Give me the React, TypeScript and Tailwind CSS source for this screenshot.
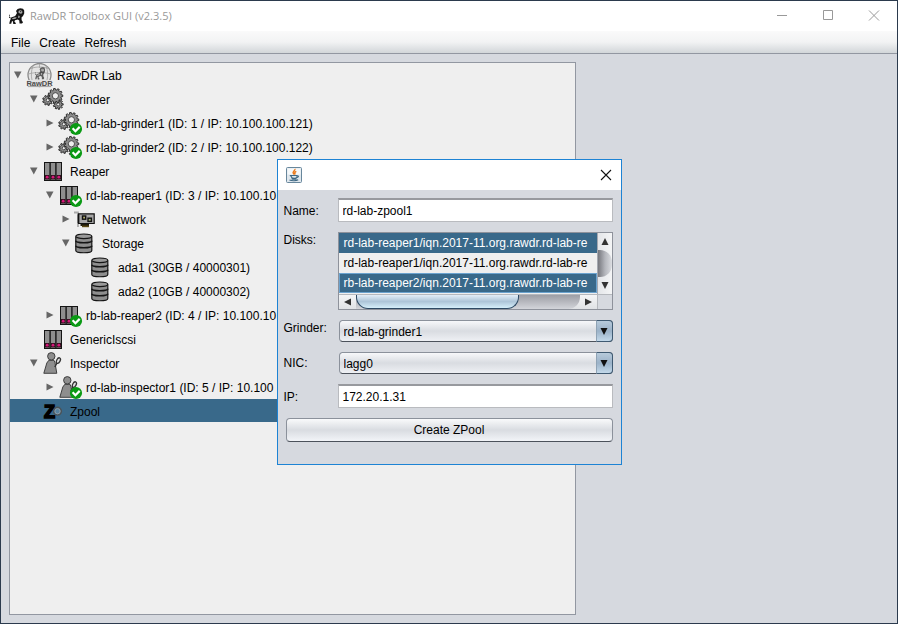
import React from 'react'

type IconName = 'lab' | 'gears' | 'rack' | 'nic' | 'disk' | 'inspector' | 'zpool'

interface TreeItem {
  label: string
  level: number
  icon: IconName
  state?: 'open' | 'closed'
  ok?: boolean
  selected?: boolean
}

const items: TreeItem[] = [
  { label: 'RawDR Lab', level: 0, icon: 'lab', state: 'open' },
  { label: 'Grinder', level: 1, icon: 'gears', state: 'open' },
  { label: 'rd-lab-grinder1 (ID: 1 / IP: 10.100.100.121)', level: 2, icon: 'gears', state: 'closed', ok: true },
  { label: 'rd-lab-grinder2 (ID: 2 / IP: 10.100.100.122)', level: 2, icon: 'gears', state: 'closed', ok: true },
  { label: 'Reaper', level: 1, icon: 'rack', state: 'open' },
  { label: 'rd-lab-reaper1 (ID: 3 / IP: 10.100.10', level: 2, icon: 'rack', state: 'open', ok: true },
  { label: 'Network', level: 3, icon: 'nic', state: 'closed' },
  { label: 'Storage', level: 3, icon: 'disk', state: 'open' },
  { label: 'ada1 (30GB / 40000301)', level: 4, icon: 'disk' },
  { label: 'ada2 (10GB / 40000302)', level: 4, icon: 'disk' },
  { label: 'rb-lab-reaper2 (ID: 4 / IP: 10.100.10', level: 2, icon: 'rack', state: 'closed', ok: true },
  { label: 'GenericIscsi', level: 1, icon: 'rack' },
  { label: 'Inspector', level: 1, icon: 'inspector', state: 'open' },
  { label: 'rd-lab-inspector1 (ID: 5 / IP: 10.100', level: 2, icon: 'inspector', state: 'closed', ok: true },
  { label: 'Zpool', level: 1, icon: 'zpool', selected: true },
]

const indents = ['pl-1', 'pl-5', 'pl-9', 'pl-13', 'pl-17']

function Dog() {
  return (
    <g>
      <path
        d="M1 6.5L0.3 8.8L1.6 9.8L3.5 9L6.2 8L8 5L7 3L8.6 1L11.2 0.2L14 0.8L15.2 2.6L15.2 5.6L14 8L12.5 9.5L12.5 12L14 14.2L13 15.6H10.5L10.3 12.6L8.8 11.6L6 12.2L5.4 13.6L7 15.2L6.4 16H4.3L3.8 13.2L3 13L2.2 15.7H0.2L1 12.5L2 10.5L0 9.8L0 7Z"
        fill="#161616"
      />
      <path d="M9.2 4.2l.8-1.6 1.8-.4 1.4.8.2 1.8-1.2 1-1.4-.3zM3 10.2l3-1 1.8.3-1.2 1.2-3 .6zM9.4 7.4l1.4.5-.4 2.2-1.4-.4z" fill="#a8a8a8" />
      <path d="M11 3.6h1.2M11.6 9.6l.2 3 1 2" fill="none" stroke="#161616" strokeWidth=".8" />
    </g>
  )
}

function gearPath(cx: number, cy: number, r: number, teeth: number) {
  const points: string[] = []
  const step = (Math.PI * 2) / teeth
  for (let i = 0; i < teeth; i++) {
    const a = i * step
    const corners = [
      [a - step * 0.3, r - 1.5],
      [a - step * 0.2, r],
      [a + step * 0.2, r],
      [a + step * 0.3, r - 1.5],
    ]
    corners.forEach(([angle, radius]) => {
      points.push(`${(cx + Math.cos(angle) * radius).toFixed(2)} ${(cy + Math.sin(angle) * radius).toFixed(2)}`)
    })
  }
  return `M${points.join('L')}Z`
}

function Gear({ cx, cy, r, hole, teeth }: { cx: number; cy: number; r: number; hole: number; teeth: number }) {
  return (
    <g>
      <path d={gearPath(cx, cy, r, teeth)} fill="#8c8c8c" stroke="#262626" strokeWidth=".9" strokeLinejoin="round" />
      <circle cx={cx} cy={cy} r={hole} fill="#efefef" stroke="#333" strokeWidth=".8" />
    </g>
  )
}

function Glyph({ name }: { name: IconName }) {
  switch (name) {
    case 'lab':
      return (
        <g>
          <circle cx="12.5" cy="12" r="11.5" fill="#e4e4e4" stroke="#8a8a8a" strokeWidth="1.3" />
          <path
            d="M4 5.5c5-2 12-2 17 0M1.5 11c6-2 16-2 22 0M6 3c-2 5-2 10-1 14M19 3c2 5 2 10 1 14M12.5 1v4"
            stroke="#a0a0a0"
            strokeWidth=".8"
            fill="none"
          />
          <g transform="translate(8 4) scale(.66 .78)" opacity=".65">
            <Dog />
          </g>
          <rect x="0" y="17" width="25" height="7" fill="#e2e2e2" />
          <text x="12.5" y="22.6" textAnchor="middle" fontSize="7.5" fontWeight="700" fill="#4c4c4c" fontFamily="Liberation Sans, sans-serif">
            RawDR
          </text>
          <path d="M1 23.6h23" stroke="#888" strokeWidth=".7" />
        </g>
      )
    case 'gears':
      return (
        <g>
          <Gear cx={15.2} cy={17.4} r={5} hole={1.5} teeth={9} />
          <Gear cx={4.8} cy={13.2} r={5.2} hole={1.6} teeth={9} />
          <Gear cx={12.4} cy={8.8} r={7.4} hole={3.1} teeth={11} />
        </g>
      )
    case 'rack':
      return (
        <g>
          <rect x="1" y="3" width="18" height="19" fill="#141414" />
          <path d="M2 4h4.4v17H2zM7.8 4h4.4v17H7.8zM13.6 4H18v17h-4.4z" fill="#8e8e8e" />
          <path d="M2 16h4.4v4.4H2zM7.8 16h4.4v4.4H7.8zM13.6 16H18v4.4h-4.4z" fill="#35101f" />
          <circle cx="4.2" cy="18.2" r="1.4" fill="#d4187a" />
          <circle cx="10" cy="18.2" r="1.4" fill="#d4187a" />
          <circle cx="15.8" cy="18.2" r="1.4" fill="#d4187a" />
        </g>
      )
    case 'nic':
      return (
        <g>
          <path d="M-1 5.5h4V20" fill="none" stroke="#a9a9a9" strokeWidth="1.8" />
          <path d="M3.5 6.8h15.7v9.7H3.5z" fill="#a6a6a6" stroke="#111" strokeWidth="1.2" />
          <path d="M3.5 7.5v8.5" stroke="#111" strokeWidth="1.6" />
          <rect x="7.5" y="9" width="3.2" height="3.2" fill="#b3ae6c" stroke="#111" strokeWidth="1.4" />
          <rect x="13" y="11.2" width="3.4" height="3.2" fill="#9fae72" stroke="#111" strokeWidth="1.4" />
          <path d="M5.5 17h8.5v2H5.5z" fill="#1d1a0c" />
          <path d="M7 18.6h7v1.6H7z" fill="#5b4a14" />
        </g>
      )
    case 'disk':
      return (
        <g fill="#8e8e8e" stroke="#151515" strokeWidth="1.2">
          <path d="M.8 5.5v14c0 3 16 3 16 0v-14" />
          <path d="M.8 9.8c0 2.6 16 2.6 16 0M.8 14.8c0 2.6 16 2.6 16 0" fill="none" strokeWidth="1.7" />
          <ellipse cx="8.8" cy="5.3" rx="8" ry="2.3" fill="#999" />
        </g>
      )
    case 'inspector':
      return (
        <g fill="#8e8e8e" stroke="#333" strokeWidth=".9">
          <path d="M5.8 9.3h5.2l1 2.4 1.8 10.6H.8L3.8 12z" />
          <circle cx="8.3" cy="5.3" r="3.7" />
          <ellipse cx="15.4" cy="9.6" rx="1.7" ry="3" transform="rotate(28 15.4 9.6)" fill="#e2e2e2" strokeWidth="1.3" />
          <path d="M14 12l-2.2 4" strokeWidth="1.5" />
        </g>
      )
    case 'zpool':
      return (
        <g>
          <text x="1" y="18.5" fontSize="18" fontWeight="700" stroke="#000" strokeWidth="1.6" fontFamily="Liberation Sans, sans-serif">
            Z
          </text>
          <circle cx="14.5" cy="12.2" r="3.8" fill="#56819f" stroke="#4b5358" strokeWidth="1.6" />
          <circle cx="14.5" cy="12.2" r="2.6" fill="none" stroke="#8f9da6" strokeWidth=".9" />
        </g>
      )
  }
}

function TreeRow({ item }: { item: TreeItem }) {
  return (
    <li
      role="treeitem"
      aria-level={item.level + 1}
      aria-selected={!!item.selected}
      aria-expanded={item.state ? item.state === 'open' : undefined}
      className={`flex items-center whitespace-nowrap ${indents[item.level]} ${item.selected ? 'h-[23px] bg-[#39698a]' : 'h-6'}`}
    >
      <svg viewBox="0 0 13 8" className="h-2 w-[13px] shrink-0" fill="#666">
        {item.state === 'open' && <path d="M0 0.5h7.5L3.8 7.5z" />}
        {item.state === 'closed' && <path d="M0.5 0.5L7.5 4L0.5 7.5z" />}
      </svg>
      <svg viewBox="0 0 25 24" className="h-6 w-[25px] shrink-0 overflow-visible">
        <Glyph name={item.icon} />
        {item.ok && (
          <g>
            <circle cx="17" cy="18" r="6.1" fill="#0a9a14" />
            <path d="M13.6 17.3l2.8 2.9 4.3-4.3" fill="none" stroke="#fff" strokeWidth="2.2" />
          </g>
        )}
      </svg>
      <span className={item.level === 0 ? 'ml-[5px] pt-0.5' : 'ml-[2px] pt-0.5'}>{item.label}</span>
    </li>
  )
}

function WindowButton({ label, children }: { label: string; children: React.ReactNode }) {
  return (
    <button type="button" aria-label={label} className="flex h-full w-[46px] items-center justify-center">
      <svg viewBox="0 0 12 12" className="size-3" fill="none" stroke="currentColor">
        {children}
      </svg>
    </button>
  )
}

function Combo({ id, value }: { id: string; value: string }) {
  return (
    <div className="relative ml-px h-[22px]">
      <select
        id={id}
        defaultValue={value}
        className="block h-full w-full appearance-none rounded border border-[#8b919b] border-b-[#4c525b] bg-linear-to-b from-[#f7f8fa] via-[#d9dce1] to-[#eef0f4] pt-px pl-1 text-xs"
      >
        <option>{value}</option>
      </select>
      <span className="pointer-events-none absolute inset-y-0 right-0 flex w-[17px] items-center justify-center rounded-r border border-[#3f5a72] border-l-[#8fa3b5] bg-linear-to-b from-[#b7cadb] via-[#9bb2c8] to-[#c3d9ea]">
        <svg viewBox="0 0 8 7" className="h-[7px] w-2">
          <path d="M0.5 0h7L4 7z" fill="#111" />
        </svg>
      </span>
    </div>
  )
}

function TextBox({ id, value }: { id: string; value: string }) {
  return (
    <input
      id={id}
      type="text"
      defaultValue={value}
      className="block h-6 w-full border border-[#b9bbbf] border-t-2 border-t-[#97999e] bg-white px-1 text-xs"
    />
  )
}

function DiskList() {
  return (
    <div className="grid h-[78px] grid-cols-[1fr_15px] grid-rows-[1fr_15px] border border-[#8e929b] bg-[#d6d9df]">
      <select
        id="disks"
        multiple
        size={3}
        defaultValue={['disk-a', 'disk-c']}
        className="block h-full w-full overflow-hidden bg-[#efefef] text-xs [scrollbar-width:none]"
      >
        <option value="disk-a" className="h-5 px-[5px] pt-[3px] pb-0 checked:bg-[#39698a] checked:text-white">
          rd-lab-reaper1/iqn.2017-11.org.rawdr.rd-lab-re
        </option>
        <option value="disk-b" className="h-5 px-[5px] pt-[3px] pb-0">
          rd-lab-reaper1/iqn.2017-11.org.rawdr.rd-lab-re
        </option>
        <option value="disk-c" className="h-5 border border-[#6ba3cf] px-1 pt-[2px] pb-0 checked:bg-[#39698a] checked:text-white">
          rb-lab-reaper2/iqn.2017-11.org.rawdr.rb-lab-re
        </option>
      </select>
      <div className="flex flex-col items-center justify-between border-l border-[#a4a8b0] bg-linear-to-r from-[#e4e6e9] to-[#f4f5f6]">
        <svg viewBox="0 0 14 17" className="h-[17px] w-[14px]">
          <path d="M3.5 12L7 5l3.5 7z" fill="#333" />
        </svg>
        <div className="w-full flex-1 rounded-r-xl bg-linear-to-r from-[#77787e] via-[#b4b6bc] to-[#dcdee2]" />
        <svg viewBox="0 0 14 17" className="h-[17px] w-[14px]">
          <path d="M3.5 5h7L7 12z" fill="#333" />
        </svg>
      </div>
      <div className="flex items-stretch border-t border-[#b5b8bd] bg-linear-to-b from-[#f4f5f6] to-[#e0e2e5]">
        <svg viewBox="0 0 17 14" className="h-[14px] w-[17px]">
          <path d="M12 3.5L5 7l7 3.5z" fill="#333" />
        </svg>
        <div className="flex flex-1 rounded-br-xl bg-linear-to-b from-[#9d9ea5] to-[#d3d5da]">
          <div className="w-[73%] rounded-b-xl border border-t-0 border-[#2e4a64] bg-linear-to-b from-[#e3eef8] via-[#adc5d8] to-[#d5effa]" />
        </div>
        <svg viewBox="0 0 17 14" className="h-[14px] w-[17px]">
          <path d="M5 3.5L12 7l-7 3.5z" fill="#333" />
        </svg>
      </div>
      <div className="border-t border-l border-[#b5b8bd]" />
    </div>
  )
}

function JavaIcon() {
  return (
    <svg viewBox="0 0 16 16" className="size-4">
      <rect x=".5" y=".5" width="15" height="15" rx="1" fill="#dfe7ed" stroke="#68879c" />
      <path d="M1.5 1.5h13v6h-13z" fill="#f5f8fa" />
      <path d="M8.8 2c1 1.5-2.8 2.6-1.5 4.2L8 7.5M10.3 4.3C8.5 5.2 8.3 6 9.3 7.5" fill="none" stroke="#ec7a1b" strokeWidth="1.5" />
      <path
        d="M4.5 8.5h6.5v1.5c0 1.6-5.5 1.6-5.5 0zM11 8.8c2.2-.4 1.8 1.6-.3 1.9M5.5 11.7c1.5.6 3.7.6 5 0M3.5 13c2.5 1.1 7 .9 8.7-.2"
        fill="none"
        stroke="#3f6884"
        strokeWidth="1.1"
      />
    </svg>
  )
}

function CreateZpoolDialog() {
  return (
    <div className="fixed inset-0 flex items-center justify-center">
      <section role="dialog" aria-label="Create ZPool" className="w-[345px] border border-[#1d83d4] bg-[#d6d9df]">
        <header className="flex h-[30px] items-center justify-between bg-white pl-2">
          <JavaIcon />
          <button type="button" aria-label="Close dialog" className="flex h-full w-[30px] items-center justify-center">
            <svg viewBox="0 0 12 12" className="size-3" stroke="#111" fill="none" strokeWidth="1.1">
              <path d="M1 1l10 10M11 1L1 11" />
            </svg>
          </button>
        </header>
        <form className="pt-2 pr-2 pb-[22px] pl-1.5" onSubmit={(e) => e.preventDefault()}>
          <div className="grid grid-cols-[54px_1fr] gap-y-2.5">
            <label htmlFor="name" className="self-center pt-0.5">Name:</label>
            <TextBox id="name" value="rd-lab-zpool1" />
            <label htmlFor="disks">Disks:</label>
            <DiskList />
            <label htmlFor="grinder">Grinder:</label>
            <Combo id="grinder" value="rd-lab-grinder1" />
            <label htmlFor="nic" className="self-center">NIC:</label>
            <Combo id="nic" value="lagg0" />
            <label htmlFor="ip" className="self-center pt-0.5">IP:</label>
            <TextBox id="ip" value="172.20.1.31" />
          </div>
          <div className="pt-2.5 pl-0.5">
            <button
              type="submit"
              className="block h-6 w-full rounded border border-[#8b919b] border-b-[#4c525b] bg-linear-to-b from-[#f9fafb] via-[#d9dce1] to-[#f2f4f8]"
            >
              Create ZPool
            </button>
          </div>
        </form>
      </section>
    </div>
  )
}

export default function App() {
  return (
    <div className="flex min-h-screen flex-col border border-[#2b3a4d] bg-[#d6d9df] font-['Liberation_Sans',Arial,sans-serif] text-xs text-black">
      <header className="flex h-[30px] items-center bg-white pl-2 text-[#999]">
        <svg viewBox="0 0 16 17" className="h-[17px] w-4">
          <Dog />
        </svg>
        <h1 className="ml-[5px] flex-1 font-['Open_Sans',sans-serif] text-[11px]">RawDR Toolbox GUI (v2.3.5)</h1>
        <WindowButton label="Minimize">
          <path d="M1 5.5h10" />
        </WindowButton>
        <WindowButton label="Maximize">
          <path d="M1.5 0.5h9v9h-9z" />
        </WindowButton>
        <WindowButton label="Close">
          <path d="M1 0.5l10 10M11 0.5L1 10.5" />
        </WindowButton>
      </header>

      <nav className="flex h-[23px] items-center gap-[9px] border-b border-[#9297a1] bg-linear-to-b from-[#fafafa] via-[#f2f3f4] to-[#d2d6d9] px-2.5 pt-0.5">
        <button type="button">File</button>
        <button type="button">Create</button>
        <button type="button">Refresh</button>
      </nav>

      <main className="grid flex-1 grid-cols-[29fr_16fr] p-2">
        <ul role="tree" className="overflow-hidden border border-[#9297a1] bg-[#efefef]">
          {items.map((item) => (
            <TreeRow key={item.label} item={item} />
          ))}
        </ul>
      </main>

      <CreateZpoolDialog />
    </div>
  )
}
